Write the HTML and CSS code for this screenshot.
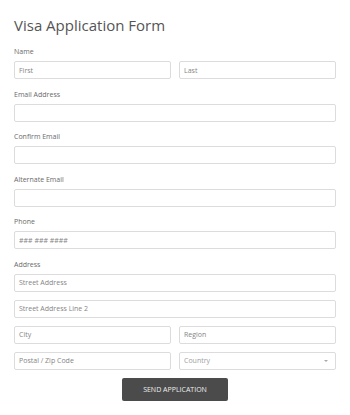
FILE: index.html
```html
<!DOCTYPE html>
<html lang="en">
<head>
    <meta charset="UTF-8">
    <title>Visa Application Form</title>
    <link rel="stylesheet" href="styles.css">
</head>
<body>

<form class="visa-form">
    <h1 class="form-title">Visa Application Form</h1>

    <div class="form-group">
        <label>Name</label>
        <div class="form-row">
            <input type="text" placeholder="First">
            <input type="text" placeholder="Last">
        </div>
    </div>

    <div class="form-group">
        <label>Email Address</label>
        <input type="email">
    </div>

    <div class="form-group">
        <label>Confirm Email</label>
        <input type="email">
    </div>

    <div class="form-group">
        <label>Alternate Email</label>
        <input type="email">
    </div>

    <div class="form-group">
        <label>Phone</label>
        <input type="tel" placeholder="### ### ####">
    </div>

    <div class="form-group address">
        <label>Address</label>
        <input type="text" placeholder="Street Address">
        <input type="text" placeholder="Street Address Line 2">
        <div class="form-row">
            <input type="text" placeholder="City">
            <input type="text" placeholder="Region">
        </div>
        <div class="form-row">
            <input type="text" placeholder="Postal / Zip Code">
            <div class="select-wrap">
                <select>
                    <option>Country</option>
                </select>
            </div>
        </div>
    </div>

    <div class="form-actions">
        <button type="submit" class="submit-btn">SEND APPLICATION</button>
    </div>
</form>

</body>
</html>
```

FILE: styles.css
```css
body {
    margin: 0;
    background: #fff;
    font-family: "Open Sans", "DejaVu Sans", sans-serif;
}

.visa-form {
    padding: 15px 14px 0;
}

.form-title {
    margin: 0 0 12px;
    font-size: 15px;
    line-height: 20px;
    font-weight: 400;
    color: #555;
}

/* Поля */
.form-group {
    margin-bottom: 10.5px;
}

label {
    display: block;
    margin-bottom: 4px;
    font-size: 7px;
    line-height: 10px;
    color: #6a6a6a;
}

input, select {
    display: block;
    box-sizing: border-box;
    width: 100%;
    height: 18px;
    margin: 0;
    padding: 0 4px;
    border: 1px solid #dcdcdc;
    border-radius: 2px;
    background: #fff;
    font-family: inherit;
    font-size: 7px;
    color: #666;
    outline: none;
}

input::placeholder {
    color: #858585;
}

.form-row {
    display: grid;
    grid-template-columns: 1fr 1fr;
    gap: 8px;
}

.address {
    display: flex;
    flex-direction: column;
    gap: 8px;
    margin-bottom: 8px;
}

.address label {
    margin-bottom: -4px;
}

/* Выпадающий список */
.select-wrap {
    position: relative;
}

select {
    appearance: none;
    -webkit-appearance: none;
    color: #a0a0a0;
}

.select-wrap::after {
    content: "";
    position: absolute;
    right: 8px;
    top: 8px;
    border-left: 2px solid transparent;
    border-right: 2px solid transparent;
    border-top: 2px solid #aaa;
}

/* Кнопка */
.form-actions {
    display: flex;
    justify-content: center;
}

.submit-btn {
    width: 106px;
    height: 23px;
    border: none;
    border-radius: 2px;
    background: #4b4b4b;
    color: #eee;
    font-family: inherit;
    font-size: 7px;
    cursor: pointer;
}
```
